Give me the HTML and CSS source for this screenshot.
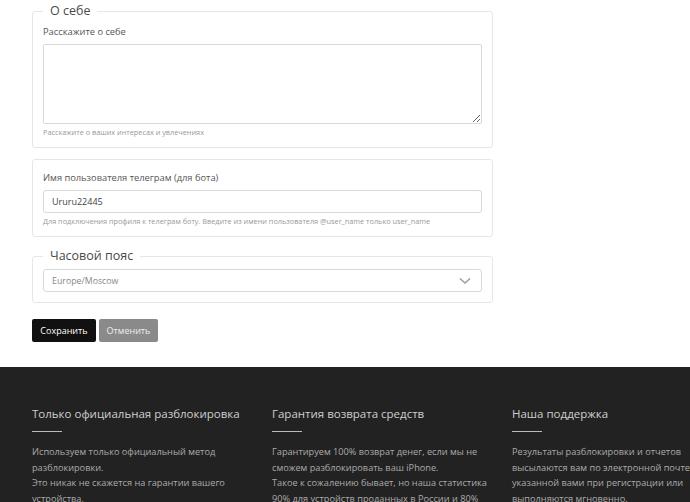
FILE: index.html
```html
<!DOCTYPE html>
<html lang="ru">
<head>
	<meta charset="UTF-8">
	<title>Профиль</title>
	<link rel="stylesheet" href="styles.css">
</head>
<body>
<div class="page">
	<form class="profile">
		<fieldset class="group">
			<legend>О себе</legend>
			<label class="label" for="about">Расскажите о себе</label>
			<textarea id="about" class="area"></textarea>
			<div class="hint">Расскажите о ваших интересах и увлечениях</div>
		</fieldset>

		<fieldset class="group plain">
			<label class="label" for="tg">Имя пользователя телеграм (для бота)</label>
			<input id="tg" class="field" type="text" value="Ururu22445">
			<div class="hint">Для подключения профиля к телеграм боту. Введите из имени пользователя @user_name только user_name</div>
		</fieldset>

		<fieldset class="group">
			<legend>Часовой пояс</legend>
			<div class="select">
				<span>Europe/Moscow</span>
				<svg width="12" height="8" viewBox="0 0 12 8"><path d="M1 1.5 L6 6 L11 1.5" fill="none" stroke="#999" stroke-width="1.4"/></svg>
			</div>
		</fieldset>

		<div class="actions">
			<button type="button" class="btn save">Сохранить</button>
			<button type="button" class="btn cancel">Отменить</button>
		</div>
	</form>
</div>

<footer class="footer">
	<div class="cols">
		<div class="col">
			<h3>Только официальная разблокировка</h3>
			<p>Используем только официальный метод разблокировки.<br>Это никак не скажется на гарантии вашего устройства.</p>
		</div>
		<div class="col">
			<h3>Гарантия возврата средств</h3>
			<p>Гарантируем 100% возврат денег, если мы не сможем разблокировать ваш iPhone.<br>Такое к сожалению бывает, но наша статистика 90% для устройств проданных в России и 80%</p>
		</div>
		<div class="col">
			<h3>Наша поддержка</h3>
			<p>Результаты разблокировки и отчетов высылаются вам по электронной почте указанной вами при регистрации или выполняются мгновенно.</p>
		</div>
	</div>
</footer>
</body>
</html>
```

FILE: styles.css
```css
* {
	margin: 0;
	padding: 0;
	box-sizing: border-box;
}

body {
	font-family: "Open Sans", "Noto Sans", sans-serif;
	background: #fff;
	color: #444;
	height: 502px;
	overflow: hidden;
}

.page {
	padding: 0 32px 25px;
}

.profile {
	width: 461px;
}

.group {
	border: 1px solid #e6e6e6;
	border-radius: 3px;
	padding: 8px 10px 10px;
	margin-top: 11px;
}

.group:first-child {
	margin-top: 3px;
}

.group legend {
	font-size: 12.5px;
	color: #4a4a4a;
	padding: 0 7px;
	line-height: 16px;
	margin-bottom: -2px;
}

.group.plain {
	padding-top: 11px;
}

.label {
	display: block;
	font-size: 9.3px;
	color: #555;
	line-height: 13px;
	margin-bottom: 6px;
}

.area {
	display: block;
	width: 100%;
	height: 80px;
	border: 1px solid #d9d9d9;
	border-radius: 2px;
	resize: vertical;
}

.field {
	display: block;
	width: 100%;
	height: 23px;
	border: 1px solid #d9d9d9;
	border-radius: 3px;
	padding: 0 8px;
	font-family: inherit;
	font-size: 9px;
	color: #444;
}

.hint {
	font-size: 7.3px;
	color: #999;
	line-height: 10px;
	margin-top: 3px;
}

.select {
	display: flex;
	align-items: center;
	justify-content: space-between;
	height: 23px;
	border: 1px solid #d9d9d9;
	border-radius: 3px;
	padding: 0 10px 0 8px;
	font-size: 8.8px;
	color: #888;
	margin-top: -1px;
}

.actions {
	display: flex;
	gap: 3px;
	margin-top: 16px;
}

.btn {
	border: none;
	border-radius: 2px;
	height: 23px;
	padding: 0 4px;
	font-family: inherit;
	font-size: 9px;
	color: #fff;
}

.save {
	background: #111;
	width: 64px;
}

.cancel {
	background: #8a8a8a;
	color: #eee;
	width: 59px;
}

.footer {
	background: #222;
	height: 140px;
	padding: 39px 0 0 32px;
	overflow: hidden;
}

.cols {
	display: flex;
}

.col {
	flex: none;
	width: 240px;
	padding-right: 18px;
}

.col h3 {
	font-weight: normal;
	font-size: 11.5px;
	color: #cfcfcf;
	line-height: 16px;
	padding-bottom: 10px;
	position: relative;
	margin-bottom: 12px;
	white-space: nowrap;
}

.col h3::after {
	content: "";
	position: absolute;
	left: 0;
	bottom: 0;
	width: 30px;
	height: 1px;
	background: #bbb;
}

.col p {
	font-size: 9.2px;
	line-height: 15.6px;
	color: #ababab;
}
```
